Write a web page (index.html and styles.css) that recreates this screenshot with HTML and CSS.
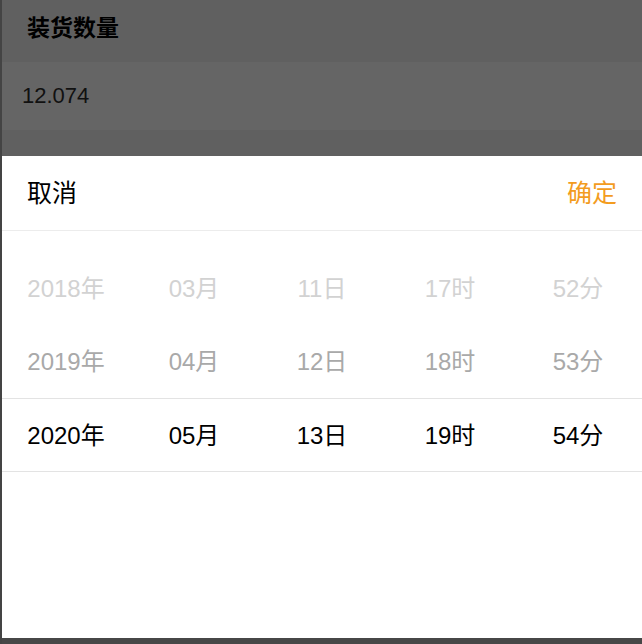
FILE: index.html
```html
<!DOCTYPE html>
<html lang="zh">
<head>
<meta charset="utf-8">
<link rel="stylesheet" href="styles.css">
</head>
<body>
<div class="screen">
  <div class="backdrop">
    <div class="field-title">装货数量</div>
    <div class="field-value">12.074</div>
    <div class="field-gap"></div>
  </div>
  <div class="sheet">
    <div class="sheet-header">
      <span class="btn-cancel">取消</span>
      <span class="btn-ok">确定</span>
    </div>
    <div class="picker">
      <div class="row row-far">
        <span>2018年</span><span>03月</span><span>11日</span><span>17时</span><span>52分</span>
      </div>
      <div class="row row-near">
        <span>2019年</span><span>04月</span><span>12日</span><span>18时</span><span>53分</span>
      </div>
      <div class="row row-selected">
        <span>2020年</span><span>05月</span><span>13日</span><span>19时</span><span>54分</span>
      </div>
    </div>
  </div>
  <div class="bottom-bar"></div>
</div>
</body>
</html>
```
FILE: styles.css
```css
html, body {
  margin: 0;
  padding: 0;
}
body {
  width: 642px;
  height: 644px;
  overflow: hidden;
  font-family: "Liberation Sans", "Noto Sans CJK SC", sans-serif;
  background: #444;
}
.screen {
  display: flex;
  flex-direction: column;
  height: 644px;
  margin-left: 2px;
}
.backdrop {
  display: flex;
  flex-direction: column;
  background: #606060;
  height: 156px;
}
.field-title {
  height: 62px;
  display: flex;
  align-items: center;
  padding-left: 25px;
  padding-bottom: 10px;
  box-sizing: border-box;
  font-size: 23px;
  font-weight: bold;
  color: #000;
}
.field-value {
  height: 68px;
  display: flex;
  align-items: center;
  padding-left: 20px;
  box-sizing: border-box;
  background: #656565;
  font-size: 22px;
  color: #111;
}
.field-gap {
  flex: 1;
}
.sheet {
  background: #fff;
  height: 482px;
  display: flex;
  flex-direction: column;
}
.sheet-header {
  height: 74px;
  box-sizing: content-box;
  border-bottom: 1px solid #ececec;
  display: flex;
  align-items: center;
  justify-content: space-between;
  padding: 0 25px 0 25px;
  font-size: 25px;
}
.sheet-header span {
  padding-bottom: 4px;
}
.btn-cancel {
  color: #000;
}
.btn-ok {
  color: #f39c1f;
}
.picker {
  padding-top: 21px;
  display: flex;
  flex-direction: column;
}
.row {
  height: 73px;
  display: grid;
  grid-template-columns: repeat(5, 1fr);
  align-items: center;
  font-size: 24px;
  box-sizing: border-box;
}
.row span {
  text-align: center;
  padding-bottom: 4px;
}
.row-far {
  color: #d2d2d2;
}
.row-near {
  color: #a9a9a9;
}
.row-selected {
  color: #000;
  height: 74px;
  border-top: 1px solid #e3e3e3;
  border-bottom: 1px solid #e3e3e3;
}
.bottom-bar {
  flex: 1;
  background: #474747;
}
```
